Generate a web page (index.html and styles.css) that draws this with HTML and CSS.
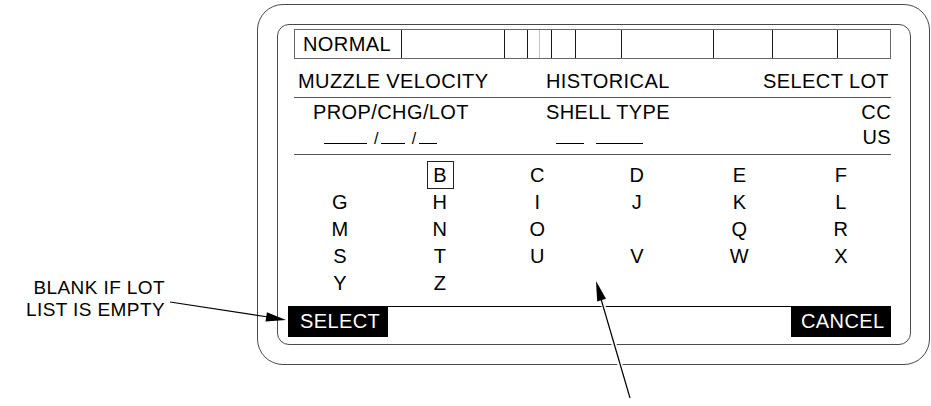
FILE: index.html
```
<!doctype html>
<html>
  <head>
    <meta charset="utf-8" />
    <title>Select Lot</title>
    <link rel="stylesheet" href="styles.css">
  </head>
  <body>
    <div class="page">
      <div class="note">BLANK IF LOT<br />LIST IS EMPTY</div>

      <div class="bezel">
        <div class="screen">
          <div class="status">
            <span class="cell label">NORMAL</span>
            <span class="cell"></span>
            <span class="cell"></span>
            <span class="cell"></span>
            <span class="cell faint"></span>
            <span class="cell"></span>
            <span class="cell"></span>
            <span class="cell"></span>
            <span class="cell"></span>
            <span class="cell"></span>
            <span class="cell"></span>
          </div>

          <div class="head">
            <span class="muzzle">MUZZLE VELOCITY</span>
            <span>HISTORICAL</span>
            <span class="select-lot">SELECT LOT</span>
          </div>

          <div class="info">
            <div class="prop">
              PROP/CHG/LOT<br /><span class="blank b-4"></span><span class="slash">/</span><span class="blank b-2"></span><span class="slash">/</span><span class="blank b-1"></span>
            </div>
            <div class="shell">
              SHELL TYPE<br /><span class="blank b-shell"></span><span class="blank b-type"></span>
            </div>
            <div class="cc">CC<br />US</div>
          </div>

          <div class="lots">
            <span></span><span><span class="picked">B</span></span><span>C</span><span>D</span><span>E</span><span>F</span>
            <span>G</span><span>H</span><span>I</span><span>J</span><span>K</span><span>L</span>
            <span>M</span><span>N</span><span>O</span><span></span><span>Q</span><span>R</span>
            <span>S</span><span>T</span><span>U</span><span>V</span><span>W</span><span>X</span>
            <span>Y</span><span>Z</span>
          </div>

          <div class="softkeys">
            <span class="key key-select">SELECT</span>
            <span class="key key-cancel">CANCEL</span>
          </div>
        </div>
      </div>

      <svg class="callouts" width="931" height="406" viewBox="0 0 931 406">
        <line x1="170" y1="302" x2="268" y2="317" stroke="#000" stroke-width="1.2" />
        <polygon points="286,320 265.5,321.6 266.9,312.3" fill="#000" />
        <line x1="629" y1="396" x2="603" y2="306" stroke="#fff" stroke-width="5" />
        <line x1="630" y1="398" x2="601" y2="299" stroke="#000" stroke-width="1.2" />
        <polygon points="596,281 606,298.8 597.2,301.6" fill="#000" />
      </svg>
    </div>
  </body>
</html>
```

FILE: styles.css
```
* {
  margin: 0;
  padding: 0;
  box-sizing: border-box;
}
html,
body {
  background: #ffffff;
  color: #000000;
  font-family: "Liberation Sans", Arial, Helvetica, sans-serif;
  font-size: 20px;
  letter-spacing: 0.4px;
}
.page {
  position: relative;
  width: 931px;
  height: 406px;
  display: flex;
  align-items: flex-start;
  overflow: hidden;
}
.note {
  width: 257px;
  flex-shrink: 0;
  padding-top: 277px;
  padding-right: 92px;
  text-align: right;
  font-size: 19px;
  line-height: 22px;
}
.bezel {
  width: 673px;
  height: 361px;
  margin-top: 4px;
  padding: 19px 18px 19px 19px;
  border: 1px solid #4a4a4a;
  border-radius: 26px;
}
.screen {
  height: 100%;
  padding: 0 19px 0 10px;
  border: 1px solid #4a4a4a;
  border-radius: 12px;
  display: flex;
  flex-direction: column;
}
.status {
  margin: 4px 0 0 6px;
  height: 30px;
  display: grid;
  grid-template-columns: 106px 103px 23px 12px 12px 24px 46px 92px 59px 65px 1fr;
  border: 1px solid #666666;
}
.cell {
  border-left: 1px solid #1a1a1a;
}
.cell.label {
  border-left: none;
  padding-left: 8px;
  line-height: 28px;
}
.cell.faint {
  border-left-color: #c4c4c4;
}
.head {
  margin-left: 6px;
  padding: 10px 2px 4px 0;
  line-height: 24px;
  display: grid;
  grid-template-columns: 252px 1fr auto;
  border-bottom: 1px solid #555555;
}
.muzzle {
  padding-left: 4px;
}
.info {
  margin-left: 6px;
  padding: 2px 0 3px 0;
  line-height: 25px;
  display: grid;
  grid-template-columns: 252px 1fr auto;
  border-bottom: 1px solid #555555;
}
.prop {
  padding-left: 19px;
}
.cc {
  text-align: right;
}
.blank {
  display: inline-block;
  height: 0;
  border-bottom: 1px solid #000000;
}
.b-4 {
  width: 43px;
  margin-left: 11px;
}
.b-2 {
  width: 24px;
  margin-left: 2px;
}
.b-1 {
  width: 18px;
  margin-left: 2px;
}
.slash {
  font-size: 16px;
  margin-left: 7px;
}
.b-shell {
  width: 28px;
  margin-left: 10px;
}
.b-type {
  width: 47px;
  margin-left: 12px;
}
.lots {
  margin-left: 1px;
  padding-top: 7px;
  display: grid;
  grid-template-columns: 102px 98px 97px 102px 103px 100px;
  grid-auto-rows: 27px;
  line-height: 27px;
  text-align: center;
}
.picked {
  display: inline-block;
  width: 27px;
  height: 28px;
  line-height: 26px;
  margin-top: -1px;
  border: 1px solid #222222;
}
.softkeys {
  margin-top: 9px;
  height: 31px;
  display: flex;
  justify-content: space-between;
  border-top: 1px solid #000000;
}
.key {
  width: 100px;
  height: 31px;
  margin-top: -1px;
  background: #000000;
  color: #ffffff;
  line-height: 31px;
}
.key-select {
  padding-left: 12px;
}
.key-cancel {
  padding-left: 10px;
}
.callouts {
  position: absolute;
  top: 0;
  left: 0;
  pointer-events: none;
}
```
